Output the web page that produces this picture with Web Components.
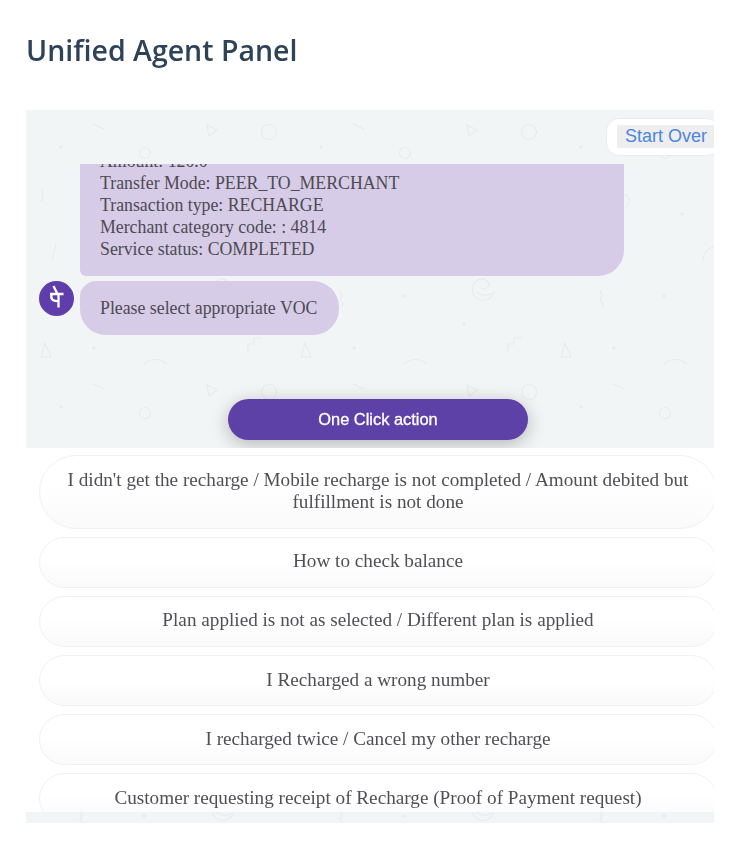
<!DOCTYPE html>
<html lang="en">
<head>
<meta charset="utf-8">
<title>Unified Agent Panel</title>
<style>
html,body{margin:0;padding:0;background:#fff;}
body{width:756px;height:852px;overflow:hidden;font-family:"Liberation Serif",serif;}
</style>
</head>
<body>
<agent-page>
  <span slot="title">Unified Agent Panel</span>
  <agent-panel>
    <start-over slot="top">Start Over</start-over>
    <chat-bubble slot="messages" variant="long">Amount: 120.0<br>Transfer Mode: PEER_TO_MERCHANT<br>Transaction type: RECHARGE<br>Merchant category code: : 4814<br>Service status: COMPLETED</chat-bubble>
    <chat-bubble slot="messages" avatar>Please select appropriate VOC</chat-bubble>
    <action-button slot="action">One Click action</action-button>
    <voc-option slot="options" class="tall">I didn't get the recharge / Mobile recharge is not completed / Amount debited but fulfillment is not done</voc-option>
    <voc-option slot="options">How to check balance</voc-option>
    <voc-option slot="options">Plan applied is not as selected / Different plan is applied</voc-option>
    <voc-option slot="options">I Recharged a wrong number</voc-option>
    <voc-option slot="options">I recharged twice / Cancel my other recharge</voc-option>
    <voc-option slot="options">Customer requesting receipt of Recharge (Proof of Payment request)</voc-option>
  </agent-panel>
</agent-page>
<script>
function wallpaper(){
  var s='%23e8ebed';
  var svg="<svg xmlns='http://www.w3.org/2000/svg' width='260' height='260' fill='none' stroke='"+s+"' stroke-width='1.2'>"
  +"<path d='M67 14l11 5'/>"
  +"<path d='M181 15l10 5-8 6z'/>"
  +"<circle cx='243' cy='22' r='7.5'/>"
  +"<circle cx='119' cy='43' r='5.5'/>"
  +"<path d='M15 78q4 7 0 14'/>"
  +"<path d='M30 134l-4 16'/>"
  +"<path d='M74 86l7-1 3 6-4 6-6-2z'/>"
  +"<path d='M157 150q1-12 14-14' />"
  +"<path d='M208 181a11 11 0 1 1-14-12a8 8 0 0 1 9 5a5 5 0 0 1-8 4M190 182q9 6 16 1'/>"
  +"<path d='M54 180l2 6-2 3 3 5-1 3'/>"
  +"<path d='M222 242v-8h6v-6h8'/>"
  +"<path d='M15 247l4-14 6 14z'/>"
  +"<path d='M118 254q11-9 23 0'/>"
  +"<g fill='"+s+"' stroke='none'><circle cx='35' cy='37' r='1.7'/><circle cx='136' cy='104' r='1.7'/><circle cx='118' cy='186' r='1.7'/><circle cx='178' cy='214' r='1.7'/><circle cx='68' cy='238' r='1.7'/></g>"
  +"</svg>";
  return 'url("data:image/svg+xml,'+svg+'")';
}
function def(name,css,html){
  customElements.define(name,class extends HTMLElement{
    constructor(){super();var r=this.attachShadow({mode:'open'});r.innerHTML='<style>'+css+'</style>'+html;}
  });
}
def('agent-page',
  ':host{display:flex;flex-direction:column;width:756px;height:852px;box-sizing:border-box;padding:0 42px 0 26px;filter:blur(.55px);}'
  +'h1{margin:0;height:110px;box-sizing:border-box;padding-top:30px;font:600 28.5px/40px "Open Sans",sans-serif;color:#2f4358;}',
  '<h1><slot name="title"></slot></h1><slot></slot>');
def('agent-panel',
  ':host{display:flex;flex-direction:column;width:688px;height:713px;overflow:hidden;background-color:#f2f5f6;background-image:'+wallpaper()+';}'
  +'.top{height:54px;display:flex;justify-content:flex-end;align-items:flex-start;box-sizing:border-box;padding-top:8px;flex:none;}'
  +'.msgs{height:171px;flex:none;overflow:hidden;display:flex;flex-direction:column;justify-content:flex-end;gap:5px;}'
  +'.act{height:113px;flex:none;box-sizing:border-box;padding:64px 0 0 16px;display:flex;justify-content:center;}'
  +'.opts{height:364px;flex:none;overflow:hidden;background:#fff;box-sizing:border-box;padding:7px 0 0 13px;display:flex;flex-direction:column;gap:7.6px;}',
  '<div class="top"><slot name="top"></slot></div><div class="msgs"><slot name="messages"></slot></div><div class="act"><slot name="action"></slot></div><div class="opts"><slot name="options"></slot></div>');
def('start-over',
  ':host{display:block;box-sizing:border-box;width:114px;height:38px;margin-right:-6px;flex:none;background:#fff;border:1.5px solid #e8ebef;border-radius:13px;padding:6px 0 0 10px;}'
  +'span{display:block;height:23px;background:#eee;padding-left:8px;font:18px/23px "Liberation Sans",Arial,sans-serif;color:#4a86e0;white-space:nowrap;}',
  '<span><slot></slot></span>');
customElements.define('chat-bubble',class extends HTMLElement{
  constructor(){super();var r=this.attachShadow({mode:'open'});
    var av=this.hasAttribute('avatar');var long=this.getAttribute('variant')==='long';
    r.innerHTML='<style>'
    +':host{display:flex;flex:none;gap:6px;padding-left:13px;align-items:flex-start;}'
    +'.slot{width:35px;height:35px;flex:none;}'
    +'svg{display:block;}'
    +'.b{background:#d6cce7;color:#4d4a52;font:17.8px/22px "Liberation Serif",serif;box-sizing:border-box;padding:16px 22px 16px 20px;white-space:nowrap;'
    +(long?'width:544px;border-radius:26px 0 26px 6px;':'border-radius:16px 26px 26px 26px;')+'}'
    +'</style><div class="slot">'+(av?'<svg width="35" height="35" viewBox="0 0 35 35"><circle cx="17.5" cy="17.5" r="17.5" fill="#5f3dab"/><path d="M11 13H24.5M19.5 13V26.5M12.5 13.5C11.5 18 13.5 20.5 19.5 20M14.5 5L18 12" fill="none" stroke="#fff" stroke-width="2.3"/></svg>':'')+'</div><div class="b"><slot></slot></div>';
  }
});
def('action-button',
  ':host{display:flex;align-items:center;justify-content:center;box-sizing:border-box;padding-bottom:2px;width:300px;height:41px;flex:none;border-radius:21px;background:#5e41a6;box-shadow:0 4px 18px rgba(0,0,0,.26);color:#fff;font:16.4px/20px "Liberation Sans",Arial,sans-serif;-webkit-text-stroke:.3px #fff;}',
  '<slot></slot>');
def('voc-option',
  ':host{display:flex;align-items:center;justify-content:center;box-sizing:border-box;flex:none;width:678px;height:51.5px;padding:0 24px 1.5px;text-align:center;border:1.5px solid #f1f1f2;border-radius:37px;background:linear-gradient(#fff 40%,#fafafb);color:#505054;font:19.2px/22.5px "Liberation Serif",serif;}'
  +':host(.tall){height:74px;}',
  '<div><slot></slot></div>');
</script>
</body>
</html>
